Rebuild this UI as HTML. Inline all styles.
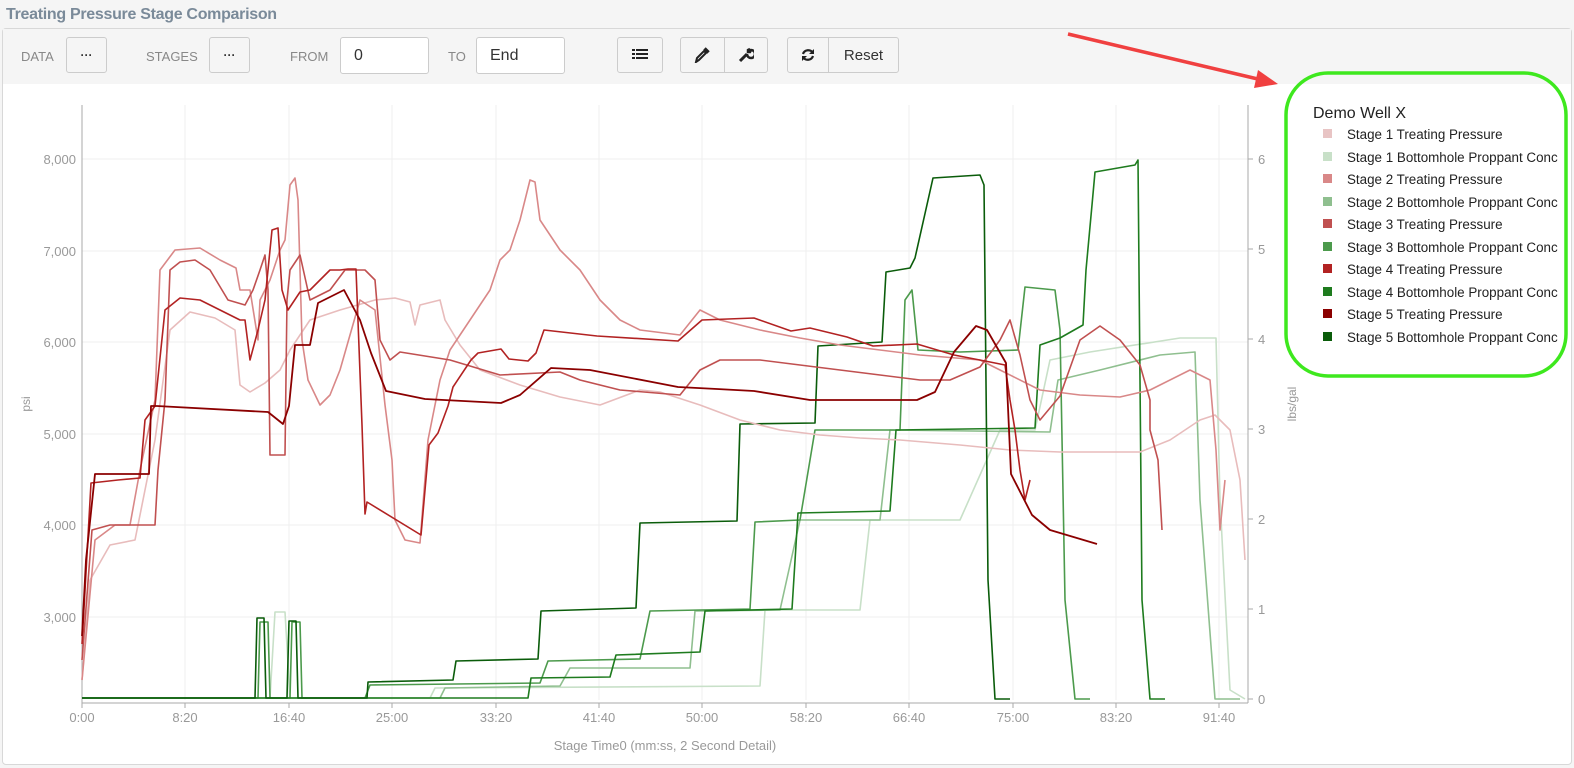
<!DOCTYPE html>
<html><head><meta charset="utf-8"><style>
body{margin:0;width:1574px;height:768px;background:#f5f5f5;font-family:"Liberation Sans",sans-serif;overflow:hidden;position:relative}
.title{position:absolute;left:6px;top:6px;font-size:16px;font-weight:bold;color:#7a8a99;letter-spacing:-0.3px}
.panel{position:absolute;left:2px;top:28px;width:1568px;height:735px;border:1px solid #d8d8d8;border-radius:4px;background:#fff}
.tb{position:absolute;left:0;top:0;width:100%;height:55px;background:#f5f5f5}
.lbl{position:absolute;top:20px;font-size:13px;color:#888}
.btn{position:absolute;top:8px;height:36px;border:1px solid #ccc;background:#f5f5f5;border-radius:3px;box-sizing:border-box;display:flex;align-items:center;justify-content:center;font-size:15px;color:#333}
.inp{position:absolute;top:8px;height:37px;border:1px solid #ccc;background:#fff;border-radius:3px;box-sizing:border-box;font-size:16px;color:#333;padding:9px 0 0 13px}
</style></head><body>
<div class="title">Treating Pressure Stage Comparison</div>
<div class="panel"><div class="tb">
<div class="lbl" style="left:18px">DATA</div>
<div class="btn" style="left:63px;width:41px;font-weight:bold;font-size:12px">···</div>
<div class="lbl" style="left:143px">STAGES</div>
<div class="btn" style="left:206px;width:41px;font-weight:bold;font-size:12px">···</div>
<div class="lbl" style="left:287px">FROM</div>
<div class="inp" style="left:337px;width:89px">0</div>
<div class="lbl" style="left:445px">TO</div>
<div class="inp" style="left:473px;width:89px">End</div>
<div class="btn" style="left:614px;width:46px"><svg width="16" height="14"><g fill="#222"><rect x="0" y="1" width="3" height="2"/><rect x="4" y="1" width="12" height="2"/><rect x="0" y="5" width="3" height="2"/><rect x="4" y="5" width="12" height="2"/><rect x="0" y="9" width="3" height="2"/><rect x="4" y="9" width="12" height="2"/></g></svg></div>
<div class="btn" style="left:677px;width:88px;justify-content:flex-start"><div style="width:44px;height:34px;border-right:1px solid #ccc;display:flex;align-items:center;justify-content:center"><svg width="16" height="16"><path d="M2 15 L3 11 L10 4 L12 6 L5 13 Z M10 2 L14 6 M11 1 L15 5" stroke="#222" stroke-width="2" fill="none"/></svg></div><div style="width:43px;display:flex;justify-content:center"><svg width="16" height="16"><path d="M2 14 L9 7" stroke="#222" stroke-width="3"/><path d="M9 7 A4 4 0 1 0 13 3 L12 5 L10 5 L10 3 L12 2" stroke="#222" stroke-width="2.5" fill="none"/></svg></div></div>
<div class="btn" style="left:784px;width:112px;justify-content:flex-start"><div style="width:40px;height:34px;border-right:1px solid #ccc;display:flex;align-items:center;justify-content:center"><svg width="14" height="14"><path d="M12 5 A5.5 5.5 0 0 0 2 6 M2 9 A5.5 5.5 0 0 0 12 8" stroke="#222" stroke-width="2.2" fill="none"/><path d="M13 1 L13 6 L8 6 Z M1 13 L1 8 L6 8 Z" fill="#222"/></svg></div><div style="flex:1;text-align:center">Reset</div></div>
</div></div>
<svg style="position:absolute;left:0;top:0" width="1574" height="768" font-family="Liberation Sans,sans-serif">
<g stroke="#efefef" stroke-width="1">
<path d="M185 105V700M289 105V700M392 105V700M496 105V700M599 105V700M702 105V700M806 105V700M909 105V700M1013 105V700M1116 105V700M1219 105V700"/>
<path d="M82 159H1248M82 251H1248M82 342H1248M82 434H1248M82 525H1248M82 617H1248"/>
</g>
<path d="M82 105V703H1248M1248 105V703" stroke="#aaa" fill="none"/>
<path d="M82 703v5M185 703v5M289 703v5M392 703v5M496 703v5M599 703v5M702 703v5M806 703v5M909 703v5M1013 703v5M1116 703v5M1219 703v5M1248 159h5M1248 249h5M1248 339h5M1248 429h5M1248 519h5M1248 609h5M1248 699h5" stroke="#aaa"/>
<g font-size="13" fill="#999" text-anchor="end">
<text x="76" y="164">8,000</text><text x="76" y="256">7,000</text><text x="76" y="347">6,000</text><text x="76" y="439">5,000</text><text x="76" y="530">4,000</text><text x="76" y="622">3,000</text></g>
<g font-size="13" fill="#999">
<text x="1258" y="164">6</text><text x="1258" y="254">5</text><text x="1258" y="344">4</text><text x="1258" y="434">3</text><text x="1258" y="524">2</text><text x="1258" y="614">1</text><text x="1258" y="704">0</text></g>
<g font-size="13" fill="#999" text-anchor="middle">
<text x="82" y="722">0:00</text><text x="185" y="722">8:20</text><text x="289" y="722">16:40</text><text x="392" y="722">25:00</text><text x="496" y="722">33:20</text><text x="599" y="722">41:40</text><text x="702" y="722">50:00</text><text x="806" y="722">58:20</text><text x="909" y="722">66:40</text><text x="1013" y="722">75:00</text><text x="1116" y="722">83:20</text><text x="1219" y="722">91:40</text>
<text x="665" y="750">Stage Time0 (mm:ss, 2 Second Detail)</text></g>
<text transform="translate(30 404) rotate(-90)" font-size="12" fill="#999" text-anchor="middle">psi</text>
<text transform="translate(1296 404) rotate(-90)" font-size="12" fill="#999" text-anchor="middle">lbs/gal</text>
<g fill="none" stroke-width="1.6" stroke-linejoin="round">
<path stroke="#c8e0c8" d="M82 698L270 698L275 612L285 612L290 698L430 698L435 688L760 686L765 610L860 610L870 520L960 520L1000 430L1035 430L1050 360L1090 352L1180 338L1216 338L1220 500L1230 690L1245 699"/>
<path stroke="#8fbf8f" d="M82 698L440 698L445 688L560 686L570 668L690 668L695 611L780 610L800 520L880 520L890 430L1050 432L1058 380L1100 370L1160 355L1195 352L1200 500L1215 699L1240 699"/>
<path stroke="#4c9a4c" d="M82 698L258 698L260 622L268 622L270 698L290 698L292 622L300 622L302 698L365 698L370 685L540 683L548 661L640 659L650 611L750 609L755 522L800 520L815 430L900 430L905 300L912 290L918 350L960 352L1018 350L1025 287L1055 290L1060 330L1065 600L1075 699L1090 699"/>
<path stroke="#1e7b1e" d="M82 698L528 698L531 678L610 677L616 655L700 652L705 611L792 609L798 513L890 511L896 430L1035 428L1040 345L1060 338L1083 325L1086 270L1092 205L1095 172L1135 165L1138 160L1142 600L1150 699L1165 699"/>
<path stroke="#0a5c0a" d="M82 698L255 698L257 618L264 618L266 698L287 698L289 621L296 621L298 698L367 698L368 682L453 680L456 661L538 659L541 611L636 608L640 523L737 521L740 424L815 423L818 346L882 342L886 272L910 268L915 258L933 178L980 175L984 185L988 580L995 699L1010 699"/>
<path stroke="#e8bcbc" d="M82 680L90 580L110 545L135 540L155 440L170 330L190 312L215 318L235 330L240 385L250 392L265 383L280 370L290 350L310 320L340 310L375 300L395 298L410 302L415 325L420 305L440 300L445 320L460 345L480 370L520 385L560 397L600 405L640 390L660 392L700 405L740 420L780 430L820 435L860 438L900 440L960 445L1010 450L1060 452L1140 452L1170 440L1200 420L1215 415L1230 430L1240 480L1245 560"/>
<path stroke="#d98888" d="M82 680L95 540L115 525L130 525L140 470L155 400L160 270L175 250L200 248L220 260L230 265L236 268L240 290L250 290L258 340L260 300L270 280L280 250L285 240L290 185L295 178L298 200L302 340L308 380L320 405L330 395L340 370L360 300L375 310L385 405L392 460L395 520L405 540L420 543L428 440L440 380L450 350L470 320L490 290L500 260L510 250L520 220L530 180L535 182L540 220L560 250L580 270L600 300L620 320L640 330L680 335L700 310L720 320L760 330L800 338L840 345L880 350L920 355L980 360L1000 370L1040 390L1080 395L1120 397L1150 390L1160 385L1190 370L1210 380L1216 450L1220 530L1225 480"/>
<path stroke="#c05050" d="M82 660L92 530L110 525L155 525L158 470L165 400L170 270L180 262L195 260L210 270L228 300L245 305L253 290L260 270L265 255L268 290L270 455L285 455L287 300L290 270L300 255L310 300L330 290L345 270L365 270L375 280L380 340L390 360L400 352L450 360L500 375L560 372L580 380L620 390L680 395L700 370L720 360L760 360L800 365L840 370L880 375L920 380L950 380L980 367L1000 340L1010 320L1020 355L1030 400L1040 420L1060 396L1080 340L1100 326L1120 340L1140 365L1150 400L1150 430L1158 460L1162 530"/>
<path stroke="#b22222" d="M82 644L91 483L118 480L140 478L145 420L155 406L165 310L180 298L200 300L220 310L240 320L245 320L250 360L258 330L265 300L272 230L278 228L282 290L288 310L300 292L310 290L330 270L340 270L348 269L356 269L362 425L365 514L367 502L421 535L429 445L438 433L448 406L453 387L471 360L478 353L501 349L509 359L528 361L536 353L544 330L597 336L678 341L702 320L754 318L791 331L810 328L847 337L873 346L917 344L954 355L990 362L1005 365L1010 400L1015 430L1020 470L1025 500L1030 480"/>
<path stroke="#8b0000" stroke-width="1.8" d="M82 636L86 560L95 474L149 474L151 406L157 406L268 412L283 424L289 406L295 345L310 345L318 303L344 290L360 320L371 353L386 391L425 399L501 403L520 395L551 368L590 370L678 387L717 389L754 391L810 400L865 400L917 400L935 392L954 352L976 326L987 330L1006 363L1011 474L1032 515L1050 530L1097 544"/>
</g>
<rect x="1286" y="73" width="280" height="303" rx="42" fill="none" stroke="#3ee81e" stroke-width="3.5"/>
<path d="M1068 34L1262 80" stroke="#f04040" stroke-width="3.5"/>
<path d="M1278 84L1258 70L1254 88Z" fill="#f04040"/>
<text x="1313" y="118" font-size="16" fill="#222">Demo Well X</text>
<g font-size="13.4" fill="#222">
<rect x="1323" y="129" width="9" height="9" fill="#e8c4c4"/><text x="1347" y="139">Stage 1 Treating Pressure</text>
<rect x="1323" y="152" width="9" height="9" fill="#c8e0c8"/><text x="1347" y="162">Stage 1 Bottomhole Proppant Conc</text>
<rect x="1323" y="174" width="9" height="9" fill="#d98888"/><text x="1347" y="184">Stage 2 Treating Pressure</text>
<rect x="1323" y="197" width="9" height="9" fill="#8fbf8f"/><text x="1347" y="207">Stage 2 Bottomhole Proppant Conc</text>
<rect x="1323" y="219" width="9" height="9" fill="#c05050"/><text x="1347" y="229">Stage 3 Treating Pressure</text>
<rect x="1323" y="242" width="9" height="9" fill="#4c9a4c"/><text x="1347" y="252">Stage 3 Bottomhole Proppant Conc</text>
<rect x="1323" y="264" width="9" height="9" fill="#b22222"/><text x="1347" y="274">Stage 4 Treating Pressure</text>
<rect x="1323" y="287" width="9" height="9" fill="#1e7b1e"/><text x="1347" y="297">Stage 4 Bottomhole Proppant Conc</text>
<rect x="1323" y="309" width="9" height="9" fill="#8b0000"/><text x="1347" y="319">Stage 5 Treating Pressure</text>
<rect x="1323" y="332" width="9" height="9" fill="#0a5c0a"/><text x="1347" y="342">Stage 5 Bottomhole Proppant Conc</text>
</g>
</svg>
</body></html>
